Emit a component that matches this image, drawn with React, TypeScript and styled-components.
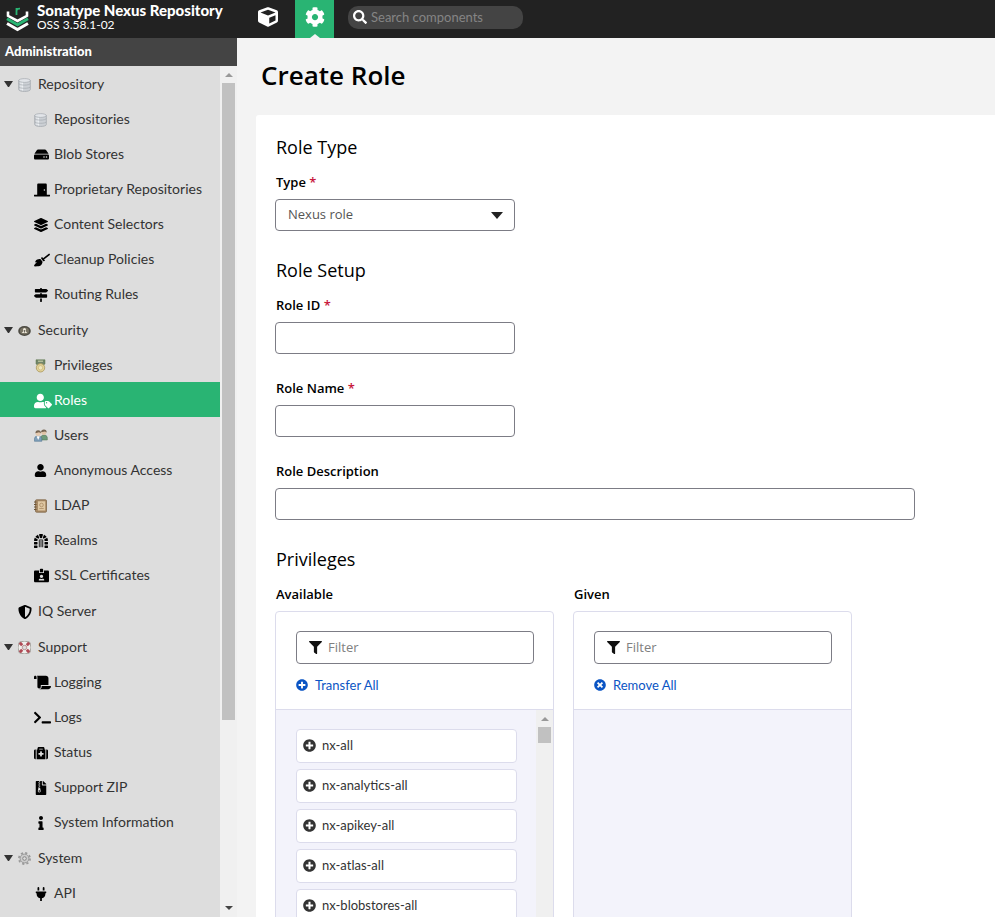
import React from "react";
import styled, { createGlobalStyle, css } from "styled-components";
import {
  FaBroom,
  FaCog,
  FaCube,
  FaDoorClosed,
  FaDungeon,
  FaFileArchive,
  FaFilter,
  FaHdd,
  FaIdCardAlt,
  FaInfo,
  FaLayerGroup,
  FaMapSigns,
  FaMedkit,
  FaPlug,
  FaPlusCircle,
  FaScroll,
  FaSearch,
  FaShieldAlt,
  FaTerminal,
  FaTimesCircle,
  FaUser,
  FaUserTag,
} from "react-icons/fa";

const brandFont = `Lato, "Liberation Sans", sans-serif`;
const bodyFont = `"Open Sans", "Noto Sans", sans-serif`;

const GlobalStyle = createGlobalStyle`
  *, *::before, *::after { box-sizing: border-box; }
  body { margin: 0; font-family: ${bodyFont}; color: #000; }
  h1, h2, p, ul { margin: 0; padding: 0; }
  ul { list-style: none; }
  button, input, select { font: inherit; }
`;

const Page = styled.div`
  display: flex;
  flex-direction: column;
  height: 100vh;
  overflow: hidden;
`;

/* ---------- top bar ---------- */

const TopBar = styled.header`
  display: flex;
  flex: none;
  height: 38px;
  background: #222;
  color: #fff;
  font-family: ${brandFont};
`;

const Brand = styled.div`
  display: flex;
  align-items: center;
  gap: 8px;
  flex: none;
  width: 249px;
  padding-left: 6px;
`;

const BrandText = styled.div`
  display: flex;
  flex-direction: column;
  padding-bottom: 6px;
`;

const BrandName = styled.span`
  font-size: 15px;
  font-weight: 900;
  line-height: 18px;
  white-space: nowrap;
`;

const BrandVersion = styled.span`
  font-size: 12px;
  line-height: 12px;
`;

const ModeButton = styled.button<{ $active?: boolean }>`
  position: relative;
  display: flex;
  align-items: center;
  justify-content: center;
  width: ${(p) => (p.$active ? 39 : 38)}px;
  padding: 0 0 4px;
  margin-right: ${(p) => (p.$active ? 14 : 8)}px;
  border: 0;
  background: ${(p) => (p.$active ? "#29b473" : "transparent")};
  color: #fff;
  font-size: 20px;
  ${(p) =>
    p.$active &&
    css`
      &::after {
        content: "";
        position: absolute;
        bottom: 0;
        border: 5px solid transparent;
        border-top: 0;
        border-bottom: 4px solid #f3f3f3;
      }
    `}
`;

const SearchBox = styled.label`
  display: flex;
  align-items: center;
  align-self: flex-start;
  gap: 4px;
  width: 175px;
  height: 23px;
  margin-top: 6px;
  padding: 0 5px 2px;
  border-radius: 10px;
  background: #444;
  font-size: 14px;
`;

const SearchInput = styled.input`
  flex: 1;
  min-width: 0;
  padding: 0;
  border: 0;
  outline: 0;
  background: transparent;
  color: #fff;
  font-size: 13px;
  &::placeholder { color: #858585; opacity: 1; }
`;

/* ---------- side navigation ---------- */

const Body = styled.div`
  display: flex;
  flex: 1;
  min-height: 0;
`;

const Sidebar = styled.nav`
  display: flex;
  flex-direction: column;
  flex: none;
  width: 237px;
  background: #ddd;
  font-family: ${brandFont};
`;

const SidebarTitle = styled.div`
  flex: none;
  height: 28px;
  padding-left: 5px;
  background: #444;
  color: #fff;
  font-size: 13px;
  font-weight: 900;
  line-height: 27px;
`;

const SidebarBody = styled.div`
  display: flex;
  flex: 1;
  min-height: 0;
`;

const Tree = styled.ul`
  flex: 1;
  overflow: hidden;
`;

const Group = styled.li`
  & + & { padding-top: 1px; }
`;

const NavLink = styled.a<{ $level: 1 | 2; $selected?: boolean }>`
  display: flex;
  align-items: center;
  height: 35px;
  padding-left: ${(p) => (p.$level === 1 ? 4 : 34)}px;
  background: ${(p) => (p.$selected ? "#29b473" : "transparent")};
  color: ${(p) => (p.$selected ? "#fff" : "#333")};
  font-size: 14px;
  line-height: 20px;
  text-decoration: none;
  white-space: nowrap;
`;

const Twisty = styled.span<{ $hidden?: boolean }>`
  width: 9px;
  margin-right: 5px;
  border: solid transparent;
  border-width: 6px 4px 0;
  border-top-color: ${(p) => (p.$hidden ? "transparent" : "#333")};
`;

const IconSlot = styled.span<{ $selected?: boolean }>`
  display: flex;
  align-items: center;
  flex: none;
  width: 20px;
  padding-top: 2px;
  color: ${(p) => (p.$selected ? "#fff" : "#000")};
  font-size: 14px;
  svg { flex: none; }
`;

const Scrollbar = styled.div`
  display: flex;
  flex-direction: column;
  align-items: center;
  flex: none;
  width: 17px;
  padding: 7px 0;
  background: #f0f0f0;
`;

const ScrollArrow = styled.span<{ $down?: boolean }>`
  border: solid transparent;
  border-width: ${(p) => (p.$down ? "4px 4px 0" : "0 4px 4px")};
  ${(p) => (p.$down ? "border-top-color: #444;" : "border-bottom-color: #999;")}
`;

const ScrollTrack = styled.div`
  flex: 1;
  width: 13px;
  margin: 6px 0;
`;

const ScrollThumb = styled.div<{ $share: number }>`
  height: ${(p) => p.$share}%;
  background: #c1c1c1;
`;

/* ---------- main area ---------- */

const Main = styled.main`
  flex: 1;
  min-width: 0;
  display: flex;
  flex-direction: column;
  padding: 19px 0 0 19px;
  background: #f3f3f3;
  overflow: hidden;
`;

const PageTitle = styled.h1`
  flex: none;
  padding-left: 5px;
  margin-bottom: 22px;
  font-size: 26px;
  font-weight: 600;
  line-height: 36px;
`;

const Panel = styled.form`
  flex: 1;
  min-height: 0;
  padding: 20px 20px 0 19px;
  background: #fff;
  border-top-left-radius: 3px;
  overflow: hidden;
`;

const Section = styled.section`
  margin-bottom: 27px;
`;

const SectionTitle = styled.h2`
  padding-left: 1px;
  margin-bottom: 13px;
  font-size: 18px;
  font-weight: 500;
  line-height: 24px;
`;

const Field = styled.div<{ $wide?: boolean }>`
  max-width: ${(p) => (p.$wide ? 640 : 240)}px;
  & + & { margin-top: 24px; }
`;

const Label = styled.label`
  display: block;
  padding-left: 1px;
  margin-bottom: 7px;
  font-size: 13px;
  font-weight: 600;
  line-height: 20px;
`;

const Required = styled.span`
  color: #c8183c;
`;

const boxed = css`
  display: block;
  width: 100%;
  height: 32px;
  border: 1px solid #7c7c85;
  border-radius: 4px;
  background: #fff;
  color: #555;
  font-size: 13px;
`;

const TextInput = styled.input`
  ${boxed}
  padding: 0 12px;
`;

const SelectWrap = styled.div`
  display: grid;
  align-items: center;
  > * { grid-area: 1 / 1; }
`;

const Select = styled.select`
  ${boxed}
  appearance: none;
  padding: 0 12px 2px;
`;

const SelectCaret = styled.span`
  justify-self: end;
  margin-right: 12px;
  border: solid transparent;
  border-width: 7px 6px 0;
  border-top-color: #222;
  pointer-events: none;
`;

const TransferRow = styled.div`
  display: flex;
  gap: 19px;
`;

const TransferColumn = styled.div`
  flex: none;
  width: 279px;
`;

const TransferBox = styled.div`
  border: 1px solid #dcdcec;
  border-radius: 4px;
  overflow: hidden;
`;

const TransferHead = styled.div`
  padding: 19px 19px 13px 20px;
  border-bottom: 1px solid #dcdcec;
`;

const FilterBox = styled.div`
  display: flex;
  align-items: center;
  gap: 6px;
  height: 33px;
  padding: 0 12px 1px;
  border: 1px solid #7c7c85;
  border-radius: 4px;
  font-size: 13px;
`;

const FilterInput = styled.input`
  flex: 1;
  min-width: 0;
  padding: 0;
  border: 0;
  outline: 0;
  color: #333;
  &::placeholder { color: #808080; opacity: 1; }
`;

const MoveAll = styled.button`
  display: flex;
  align-items: center;
  gap: 7px;
  height: 22px;
  margin-top: 10px;
  padding: 0;
  border: 0;
  background: none;
  color: #0b55c4;
  font-family: ${brandFont};
  font-size: 13px;
`;

const TransferBody = styled.div`
  display: flex;
  height: 300px;
  background: #f3f3fb;
`;

const ItemList = styled.ul`
  flex: 1;
  display: flex;
  flex-direction: column;
  gap: 6px;
  padding: 19px 19px 19px 20px;
`;

const ItemButton = styled.button`
  display: flex;
  align-items: center;
  gap: 6px;
  width: 100%;
  height: 34px;
  padding: 0 6px 2px;
  border: 1px solid #dcdcec;
  border-radius: 4px;
  background: #fff;
  color: #333;
  font-family: ${brandFont};
  font-size: 13px;
`;

/* ---------- drawings ---------- */

const Logo = () => (
  <svg width="23" height="25" viewBox="0 0 23 25" fill="none" aria-hidden="true">
    <path d="M10.500 8V1M10.500 3.500Q11 1.500 14 1.700" stroke="#29b473" strokeWidth="1.800" />
    <path d="M2 4.500v4.300l9.500 5.200L21 8.800V4.500" stroke="#fff" strokeWidth="2.600" />
    <path d="M1 11.800l10.500 5.900L22 11.800" stroke="#29b473" strokeWidth="3" />
    <path d="M1 16.500l10.500 6L22 16.500" stroke="#fff" strokeWidth="3" />
  </svg>
);

const DatabaseIcon = () => (
  <svg width="13" height="14" viewBox="0 0 13 14" aria-hidden="true">
    <path d="M.7 2.500v9c0 2.600 11.600 2.600 11.600 0v-9z" fill="#ccd0d5" stroke="#a4a9af" strokeWidth=".8" />
    <path d="M3 4v8M4.500 4v8.500" stroke="#eceff2" strokeWidth="1.200" />
    <path d="M.9 5.600c0 2 11.200 2 11.200 0M.9 8.800c0 2 11.200 2 11.200 0" stroke="#a4a9af" fill="none" strokeWidth=".7" />
    <ellipse cx="6.500" cy="2.500" rx="5.800" ry="1.900" fill="#e2e5e9" stroke="#a4a9af" strokeWidth=".7" />
  </svg>
);

const SecurityIcon = () => (
  <svg width="13" height="12" viewBox="0 0 13 12" aria-hidden="true">
    <ellipse cx="6.500" cy="6" rx="6.300" ry="5" fill="#4c4a42" />
    <ellipse cx="6.500" cy="6" rx="4.600" ry="3.400" fill="#777263" />
    <circle cx="6.500" cy="4.600" r="1.500" fill="#eee9db" />
    <path d="M6.500 5l2.800 3H3.700z" fill="#eee9db" />
    <path d="M6.500 5v2.500" stroke="#4c4a42" strokeWidth=".8" />
  </svg>
);

const MedalIcon = () => (
  <svg width="13" height="14" viewBox="0 0 13 14" aria-hidden="true">
    <path d="M2 .8h9V5L8.500 6.500h-4L2 5z" fill="#71856a" stroke="#5b7547" strokeWidth=".5" />
    <path d="M4 2.200h5" stroke="#c9d0a8" strokeWidth="1.100" />
    <circle cx="6.500" cy="8.800" r="4.200" fill="#e3d399" stroke="#a8955a" strokeWidth=".8" />
    <circle cx="6.500" cy="8.800" r="2.200" fill="#efe5bd" stroke="#c3b16f" strokeWidth=".6" />
  </svg>
);

const UsersIcon = () => (
  <svg width="14" height="13" viewBox="0 0 14 13" aria-hidden="true">
    <path d="M7 11V8.500Q7 6 10 6t3.300 2.500V11z" fill="#6f9b7a" stroke="#4e7150" strokeWidth=".5" />
    <circle cx="9.800" cy="3.600" r="2.500" fill="#dfc3a6" />
    <path d="M7 3.200Q7.300.3 10 .4t2.700 3L11 2.400z" fill="#766552" />
    <path d="M.5 12.300V9.500Q.5 7 4 7t3.800 2.500v2.800z" fill="#7f9fb8" stroke="#426a8b" strokeWidth=".5" />
    <circle cx="4.200" cy="4.600" r="2.500" fill="#e5c9ae" />
    <path d="M1.400 4.300Q1.500 1.200 4.200 1.300t2.800 3L5 3.200z" fill="#766552" />
    <path d="M2.600 7.200l1.600 3.800 1.600-3.800z" fill="#fff" />
  </svg>
);

const BookIcon = () => (
  <svg width="13" height="14" viewBox="0 0 13 14" aria-hidden="true">
    <rect x="1.500" y=".8" width="11" height="12.400" rx="1" fill="#a98b66" stroke="#80674a" strokeWidth=".8" />
    <rect x="4" y="2.300" width="7.200" height="9.200" fill="#dfc8a4" />
    <circle cx="7.500" cy="6" r="1.800" fill="none" stroke="#a98b66" strokeWidth=".8" />
    <path d="M5.300 9.500h4.400" stroke="#a98b66" strokeWidth=".8" />
    <path d="M0 3h2.500M0 5.500h2.500M0 8h2.500M0 10.500h2.500" stroke="#6d5435" />
  </svg>
);

const LifebuoyIcon = () => (
  <svg width="13" height="13" viewBox="0 0 13 13" aria-hidden="true">
    <rect x=".5" y=".5" width="12" height="12" rx="3" fill="#c9c8c4" stroke="#97968f" strokeWidth=".8" />
    <circle cx="6.500" cy="6.500" r="4.200" fill="none" stroke="#efefec" strokeWidth="3.600" />
    <g stroke="#b04a55" strokeWidth="3">
      <path d="M1.800 1.800l2.400 2.400M11.200 1.800L8.800 4.200M1.800 11.200l2.400-2.400M11.200 11.200L8.800 8.800" />
    </g>
    <circle cx="6.500" cy="6.500" r="2.200" fill="#ddd" stroke="#a76a6c" strokeWidth=".6" />
  </svg>
);

const GearIcon = () => (
  <svg width="13" height="13" viewBox="0 0 13 13" fill="none" aria-hidden="true">
    <circle cx="6.500" cy="6.500" r="5.600" stroke="#999" strokeWidth="1.700" strokeDasharray="2.200 2.200" />
    <circle cx="6.500" cy="6.500" r="4.400" fill="#ccc" stroke="#999" />
    <circle cx="6.500" cy="6.500" r="1.800" fill="#ddd" stroke="#888" />
  </svg>
);

/* ---------- data ---------- */

type NavItem = { label: string; icon: React.ReactNode; selected?: boolean };
type NavGroup = NavItem & { children: NavItem[] };

const navigation: NavGroup[] = [
  {
    label: "Repository",
    icon: <DatabaseIcon />,
    children: [
      { label: "Repositories", icon: <DatabaseIcon /> },
      { label: "Blob Stores", icon: <FaHdd size={15} /> },
      { label: "Proprietary Repositories", icon: <FaDoorClosed size={16} /> },
      { label: "Content Selectors", icon: <FaLayerGroup /> },
      { label: "Cleanup Policies", icon: <FaBroom size={16} /> },
      { label: "Routing Rules", icon: <FaMapSigns /> },
    ],
  },
  {
    label: "Security",
    icon: <SecurityIcon />,
    children: [
      { label: "Privileges", icon: <MedalIcon /> },
      { label: "Roles", icon: <FaUserTag size={18} />, selected: true },
      { label: "Users", icon: <UsersIcon /> },
      { label: "Anonymous Access", icon: <FaUser size={13} /> },
      { label: "LDAP", icon: <BookIcon /> },
      { label: "Realms", icon: <FaDungeon /> },
      { label: "SSL Certificates", icon: <FaIdCardAlt size={15} /> },
    ],
  },
  { label: "IQ Server", icon: <FaShieldAlt size={14} />, children: [] },
  {
    label: "Support",
    icon: <LifebuoyIcon />,
    children: [
      { label: "Logging", icon: <FaScroll size={17} /> },
      { label: "Logs", icon: <FaTerminal size={17} /> },
      { label: "Status", icon: <FaMedkit /> },
      { label: "Support ZIP", icon: <FaFileArchive /> },
      { label: "System Information", icon: <FaInfo /> },
    ],
  },
  {
    label: "System",
    icon: <GearIcon />,
    children: [{ label: "API", icon: <FaPlug /> }],
  },
];

const privileges = [
  "nx-all",
  "nx-analytics-all",
  "nx-apikey-all",
  "nx-atlas-all",
  "nx-blobstores-all",
];

/* ---------- components ---------- */

const NavRow = ({ item, level, leaf }: { item: NavItem; level: 1 | 2; leaf?: boolean }) => (
  <NavLink href="#" $level={level} $selected={item.selected} aria-current={item.selected ? "page" : undefined}>
    {level === 1 && <Twisty $hidden={leaf} />}
    <IconSlot $selected={item.selected}>{item.icon}</IconSlot>
    {item.label}
  </NavLink>
);

const Scroller = ({ share, bottomArrow = true }: { share: number; bottomArrow?: boolean }) => (
  <Scrollbar aria-hidden="true">
    <ScrollArrow />
    <ScrollTrack>
      <ScrollThumb $share={share} />
    </ScrollTrack>
    {bottomArrow && <ScrollArrow $down />}
  </Scrollbar>
);

const TextField = ({ id, label, required, wide }: { id: string; label: string; required?: boolean; wide?: boolean }) => (
  <Field $wide={wide}>
    <Label htmlFor={id}>
      {label} {required && <Required>*</Required>}
    </Label>
    <TextInput id={id} type="text" />
  </Field>
);

const TransferList = ({
  id,
  title,
  action,
  actionIcon,
  items,
}: {
  id: string;
  title: string;
  action: string;
  actionIcon: React.ReactNode;
  items: string[];
}) => (
  <TransferColumn>
    <Label htmlFor={id}>{title}</Label>
    <TransferBox>
      <TransferHead>
        <FilterBox>
          <FaFilter size={13} color="#111" />
          <FilterInput id={id} type="text" placeholder="Filter" />
        </FilterBox>
        <MoveAll type="button">
          {actionIcon}
          {action}
        </MoveAll>
      </TransferHead>
      <TransferBody>
        {items.length > 0 && (
          <>
            <ItemList>
              {items.map((name) => (
                <li key={name}>
                  <ItemButton type="button">
                    <FaPlusCircle size={13} />
                    {name}
                  </ItemButton>
                </li>
              ))}
            </ItemList>
            <Scroller share={6} />
          </>
        )}
      </TransferBody>
    </TransferBox>
  </TransferColumn>
);

export default function App() {
  return (
    <Page>
      <GlobalStyle />
      <TopBar>
        <Brand>
          <Logo />
          <BrandText>
            <BrandName>Sonatype Nexus Repository</BrandName>
            <BrandVersion>OSS 3.58.1-02</BrandVersion>
          </BrandText>
        </Brand>
        <ModeButton type="button" aria-label="Browse">
          <FaCube />
        </ModeButton>
        <ModeButton type="button" aria-label="Administration" $active>
          <FaCog />
        </ModeButton>
        <SearchBox>
          <FaSearch aria-hidden="true" />
          <SearchInput type="search" placeholder="Search components" aria-label="Search components" />
        </SearchBox>
      </TopBar>
      <Body>
        <Sidebar>
          <SidebarTitle>Administration</SidebarTitle>
          <SidebarBody>
            <Tree>
              {navigation.map((group) => (
                <Group key={group.label}>
                  <NavRow item={group} level={1} leaf={group.children.length === 0} />
                  <ul>
                    {group.children.map((item) => (
                      <li key={item.label}>
                        <NavRow item={item} level={2} />
                      </li>
                    ))}
                  </ul>
                </Group>
              ))}
            </Tree>
            <Scroller share={78} />
          </SidebarBody>
        </Sidebar>
        <Main>
          <PageTitle>Create Role</PageTitle>
          <Panel>
            <Section>
              <SectionTitle>Role Type</SectionTitle>
              <Field>
                <Label htmlFor="role-type">
                  Type <Required>*</Required>
                </Label>
                <SelectWrap>
                  <Select id="role-type" defaultValue="nexus">
                    <option value="nexus">Nexus role</option>
                  </Select>
                  <SelectCaret />
                </SelectWrap>
              </Field>
            </Section>
            <Section>
              <SectionTitle>Role Setup</SectionTitle>
              <TextField id="role-id" label="Role ID" required />
              <TextField id="role-name" label="Role Name" required />
              <TextField id="role-description" label="Role Description" wide />
            </Section>
            <Section>
              <SectionTitle>Privileges</SectionTitle>
              <TransferRow>
                <TransferList
                  id="available-filter"
                  title="Available"
                  action="Transfer All"
                  actionIcon={<FaPlusCircle size={12} />}
                  items={privileges}
                />
                <TransferList
                  id="given-filter"
                  title="Given"
                  action="Remove All"
                  actionIcon={<FaTimesCircle size={12} />}
                  items={[]}
                />
              </TransferRow>
            </Section>
          </Panel>
        </Main>
      </Body>
    </Page>
  );
}
